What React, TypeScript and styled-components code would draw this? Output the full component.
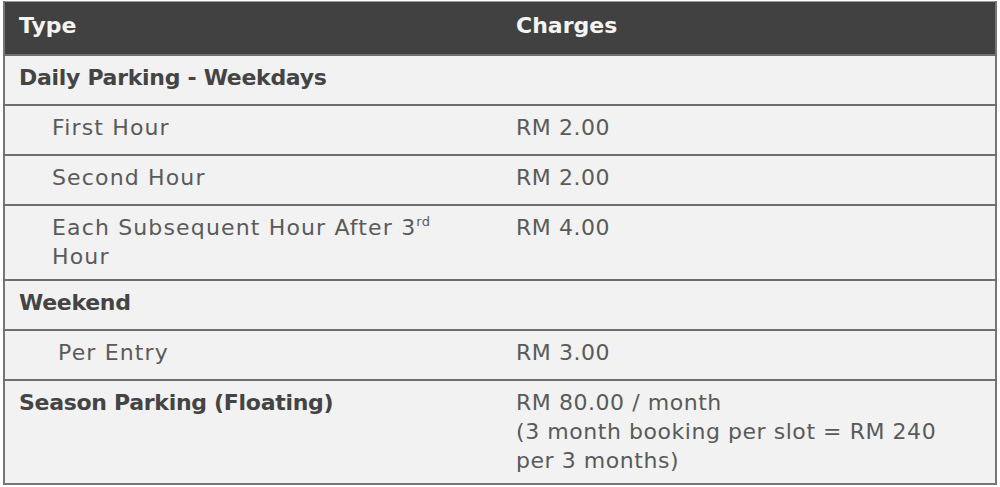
import styled, { createGlobalStyle } from "styled-components";

const GlobalStyle = createGlobalStyle`
  html, body {
    margin: 0;
    padding: 0;
    background: #ffffff;
  }
  body {
    font-family: "DejaVu Sans", "Liberation Sans", sans-serif;
  }
`;

type Line = {
  type: string;
  charge?: string[];
  kind: "section" | "item";
  indent?: number;
  sup?: { before: string; sup: string; after: string };
};

const rows: Line[] = [
  { type: "Daily Parking - Weekdays", kind: "section" },
  { type: "First Hour", kind: "item", charge: ["RM 2.00"] },
  { type: "Second Hour", kind: "item", charge: ["RM 2.00"] },
  {
    type: "",
    kind: "item",
    charge: ["RM 4.00"],
    sup: { before: "Each Subsequent Hour After 3", sup: "rd", after: "Hour" },
  },
  { type: "Weekend", kind: "section" },
  { type: "Per Entry", kind: "item", indent: 57, charge: ["RM 3.00"] },
  {
    type: "Season Parking (Floating)",
    kind: "section",
    charge: [
      "RM 80.00 / month",
      "(3 month booking per slot = RM 240",
      "per 3 months)",
    ],
  },
];

export default function App() {
  return (
    <>
      <GlobalStyle />
      <Page>
        <Table>
          <thead>
            <tr>
              <HeadCell $first>Type</HeadCell>
              <HeadCell>Charges</HeadCell>
            </tr>
          </thead>
          <tbody>
            {rows.map((row, i) => (
              <Row key={i}>
                <TypeCell $bold={row.kind === "section"} $indent={row.indent ?? (row.kind === "item" ? 51 : 18)}>
                  {row.sup ? (
                    <>
                      {row.sup.before}
                      <Sup>{row.sup.sup}</Sup>
                      <br />
                      {row.sup.after}
                    </>
                  ) : (
                    row.type
                  )}
                </TypeCell>
                <ChargeCell>
                  {row.charge?.map((c, j) => (
                    <div key={j}>{c}</div>
                  ))}
                </ChargeCell>
              </Row>
            ))}
          </tbody>
        </Table>
      </Page>
    </>
  );
}

const Page = styled.div`
  padding: 1px 3px 0 3px;
  width: 994px;
`;

const Table = styled.table`
  width: 994px;
  border-collapse: collapse;
  border: 2px solid #767676;
  border-top: 1px solid #9a9a9a;
  background: #f2f2f2;
  table-layout: fixed;
`;

const HeadCell = styled.th<{ $first?: boolean }>`
  width: ${(p) => (p.$first ? "498px" : "auto")};
  height: 53px;
  padding: 0 0 5px 14px;
  box-sizing: border-box;
  background: #414141;
  color: #f4f4f4;
  font-size: 22px;
  font-weight: 700;
  text-align: left;
  letter-spacing: 0;
  vertical-align: middle;
`;

const Row = styled.tr`
  border-top: 2px solid #6e6e6e;
`;

const TypeCell = styled.td<{ $bold: boolean; $indent: number }>`
  height: 50px;
  box-sizing: border-box;
  padding: 7px 10px 8px ${(p) => p.$indent - 4}px;
  vertical-align: top;
  font-size: 22px;
  line-height: 29px;
  letter-spacing: ${(p) => (p.$bold ? "-0.3px" : "1.15px")};
  font-weight: ${(p) => (p.$bold ? 700 : 400)};
  color: ${(p) => (p.$bold ? "#444444" : "#5a5a5a")};
`;

const ChargeCell = styled.td`
  box-sizing: border-box;
  padding: 7px 10px 8px 14px;
  vertical-align: top;
  font-size: 22px;
  line-height: 29px;
  letter-spacing: 0.55px;
  color: #5a5a5a;
`;

const Sup = styled.sup`
  font-size: 13px;
  line-height: 0;
  vertical-align: 9px;
  letter-spacing: 0.3px;
`;
